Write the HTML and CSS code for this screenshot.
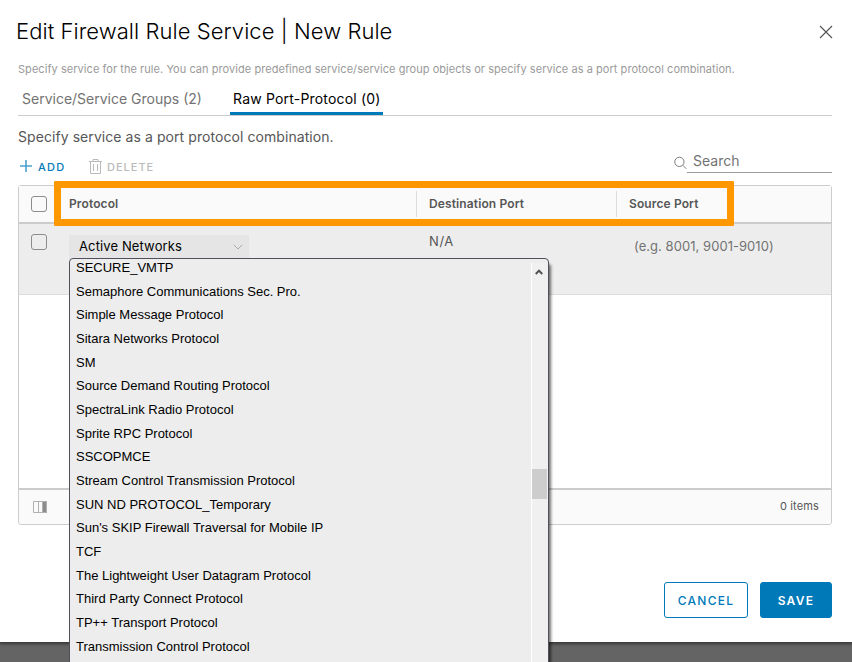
FILE: index.html
```html
<!DOCTYPE html>
<html lang="en">
<head>
<meta charset="utf-8">
<title>Edit Firewall Rule Service</title>
<link rel="stylesheet" href="styles.css">
</head>
<body>
<main class="modal">
  <header class="modal-head">
    <h1 class="title">Edit Firewall Rule Service | New Rule</h1>
    <svg class="close" width="14" height="14" viewBox="0 0 14 14"><path d="M1 1L13 13M13 1L1 13"/></svg>
  </header>
  <p class="hint"><span>Specify service for the rule. You can provide predefined service/service group objects or specify service as a port protocol combination.</span></p>
  <nav class="tabs">
    <span class="tab"><span class="tab-a">Service/Service Groups (2)</span></span>
    <span class="tab active"><span class="tab-b">Raw Port-Protocol (0)</span></span>
  </nav>
  <p class="lead"><span>Specify service as a port protocol combination.</span></p>
  <div class="toolbar">
    <span class="action add"><svg width="12" height="12" viewBox="0 0 12 12"><path d="M6 0V12M0 6H12"/></svg><span>ADD</span></span>
    <span class="action delete"><svg width="13" height="15" viewBox="0 0 13 15"><path d="M0 2.5H13M4 2V.5H9V2M1.5 3V14.5H11.5V3M4.5 5V12M8.5 5V12"/></svg><span>DELETE</span></span>
    <span class="search"><svg width="14" height="14" viewBox="0 0 14 14"><circle cx="5.8" cy="5.8" r="5"/><path d="M9.5 9.5L13.2 13.2"/></svg><span class="search-field">Search</span></span>
  </div>
  <section class="grid">
    <div class="row grid-head">
      <i class="check"></i>
      <b class="col c1"><span>Protocol</span></b>
      <b class="col c2"><span>Destination Port</span></b>
      <b class="col c3"><span>Source Port</span></b>
      <div class="highlight"></div>
    </div>
    <div class="row grid-row">
      <i class="check"></i>
      <div class="cell-protocol">
        <div class="select"><span>Active Networks</span><svg width="10" height="6" viewBox="0 0 10 6"><path d="M.8.8L5 5L9.2.8"/></svg></div>
        <div class="menu">
          <div class="options">
            <div>SECURE_VMTP</div>
            <div>Semaphore Communications Sec. Pro.</div>
            <div>Simple Message Protocol</div>
            <div>Sitara Networks Protocol</div>
            <div>SM</div>
            <div>Source Demand Routing Protocol</div>
            <div>SpectraLink Radio Protocol</div>
            <div>Sprite RPC Protocol</div>
            <div>SSCOPMCE</div>
            <div>Stream Control Transmission Protocol</div>
            <div>SUN ND PROTOCOL_Temporary</div>
            <div>Sun's SKIP Firewall Traversal for Mobile IP</div>
            <div>TCF</div>
            <div>The Lightweight User Datagram Protocol</div>
            <div>Third Party Connect Protocol</div>
            <div>TP++ Transport Protocol</div>
            <div>Transmission Control Protocol</div>
          </div>
          <div class="scroll"><svg width="8" height="6" viewBox="0 0 8 6"><path d="M.8 5L4 1.6L7.2 5"/></svg><div class="thumb"></div></div>
        </div>
      </div>
      <span class="na">N/A</span>
      <span class="example">(e.g. 8001, 9001-9010)</span>
    </div>
    <div class="grid-empty"></div>
    <footer class="grid-foot">
      <svg width="14" height="12" viewBox="0 0 14 12"><path class="fill" d="M10 0H14V12H10Z"/><path d="M.5.5H13.5V11.5H.5ZM5.5 1V11M9.5 1V11"/></svg>
      <span>0 items</span>
    </footer>
  </section>
  <div class="buttons">
    <span class="btn cancel"><span>CANCEL</span></span>
    <span class="btn save"><span>SAVE</span></span>
  </div>
</main>
</body>
</html>
```
FILE: styles.css
```css
* { box-sizing: border-box; }
html, body { height: 662px; overflow: hidden; }
body { margin: 0; background: #646464; font-family: Inter, "Noto Sans", sans-serif; color: #565656; }
svg { fill: none; stroke: currentColor; flex: none; display: block; }
span { white-space: nowrap; }
.modal { height: 642px; background: #fff; padding: 0 20px 0 18px; box-shadow: 0 1px 3px 1px rgba(0,0,0,.45); }
.modal-head { display: flex; align-items: center; justify-content: space-between; height: 62px; }
.title { margin: 0 0 0 -2px; font-size: 22px; font-weight: 300; line-height: 28px; letter-spacing: .06px; color: #000; }
.close { margin: 2px -1px 0 0; color: #565656; stroke-width: 1.2; }
.hint { margin: 0; height: 24px; line-height: 14px; font-size: 11px; letter-spacing: .052px; color: #9a9a9a; }
.tabs { display: flex; height: 30px; border-bottom: 1px solid #ccc; font-size: 14px; line-height: 26px; }
.tab { padding: 0 4px; color: #737373; width: 187px; margin-right: 25px; }
.tab.active { width: 153px; padding: 0 3px; margin: 0; color: #000; border-bottom: 3px solid #0079b8; letter-spacing: .19px; }
.lead { margin: 0; padding-top: 11px; height: 37px; font-size: 14px; line-height: 20px; letter-spacing: .07px; }
.toolbar { display: flex; height: 32px; font-size: 11px; font-weight: 500; line-height: 28px; }
.action { display: flex; align-items: center; height: 28px; letter-spacing: 1px; }
.add { color: #0079b8; padding-left: 2px; width: 71px; gap: 6px; letter-spacing: 1.3px; }
.add svg { color: #4da1cd; stroke-width: 1.6; margin-top: -2px; }
.delete { color: #bbb; gap: 5px; }
.delete svg { margin-top: -2px; }
.search { display: flex; margin-left: auto; font-size: 14px; font-weight: 400; color: #737373; }
.search svg { margin-top: 3px; width: 13px; }
.search-field { width: 145px; height: 20px; line-height: 16px; padding-left: 6px; border-bottom: 1px solid #9a9a9a; }
.grid { height: 340px; border: 1px solid #ccc; border-radius: 3px; background: #fff; }
.row { display: flex; position: relative; padding-left: 12px; }
.check { width: 16px; height: 16px; border: 1px solid #8c8c8c; border-radius: 3px; margin-right: 22px; flex: none; }
.grid-head { z-index: 1; height: 38px; background: #fafafa; border-bottom: 2px solid #ccc; align-items: center; }
.col { font-size: 12px; font-weight: 600; line-height: 26px; letter-spacing: .12px; }
.c1 { width: 347px; }
.c2 { width: 200px; border-left: 1px solid #ddd; padding-left: 12px; }
.c3 { border-left: 1px solid #ddd; padding-left: 12px; }
.highlight { position: absolute; left: 35px; top: -5px; width: 680px; height: 45px; border: 7px solid #ff9800; border-radius: 1px; }
.grid-row { height: 71px; background: #ededed; border-bottom: 1px solid #ddd; padding-top: 10px; font-size: 13px; }
.cell-protocol { position: relative; width: 360px; }
.select { display: flex; align-items: center; justify-content: space-between; width: 180px; height: 24px; padding: 0 6px 2px 10px; margin-top: 1px; background: #e5e5e5; color: #000; letter-spacing: .12px; }
.select svg { color: #aaa; margin-top: 2px; }
.na { line-height: 14px; width: 205px; letter-spacing: .6px; }
.example { line-height: 24px; color: #737373; letter-spacing: .05px; }
.menu { position: absolute; z-index: 2; left: 0; top: 24px; width: 480px; height: 420px; background: #ededed; border: 1px solid #50505c; border-radius: 4px 4px 0 0; box-shadow: 3px 5px 3px -1px rgba(0,0,0,.55); padding-top: 4px; display: flex; font-family: "Liberation Sans", Arial, sans-serif; color: #000; }
.options { flex: 1; height: 412px; overflow: hidden; padding-left: 6px; font-size: 13px; line-height: 23.67px; }
.options div { height: 23.67px; position: relative; top: -7px; white-space: nowrap; }
.scroll { width: 17px; height: 412px; border-left: 1px solid #fff; background: #f0f0f0; padding: 6px 1px 0 0; color: #505050; }
.scroll svg { margin-left: 3px; stroke-width: 2; }
.thumb { height: 30px; margin-top: 194px; background: #cdcdcd; }
.grid-empty { height: 193px; }
.grid-foot { display: flex; justify-content: space-between; align-items: center; height: 36px; padding: 0 12px 2px 14px; background: #fafafa; border-top: 2px solid #ccc; border-radius: 0 0 3px 3px; font-size: 11px; letter-spacing: .15px; }
.grid-foot svg { color: #b0b0b0; margin-top: 2px; }
.grid-foot .fill { fill: #8c8c8c; stroke: none; }
.buttons { display: flex; justify-content: flex-end; gap: 12px; padding-top: 57px; font-size: 12px; font-weight: 500; letter-spacing: 1.3px; }
.btn { height: 36px; line-height: 36px; text-align: center; border: 1px solid #0079b8; border-radius: 3px; color: #0079b8; }
.cancel { width: 84px; }
.save { width: 72px; background: #0079b8; color: #fff; font-weight: 600; }
```
